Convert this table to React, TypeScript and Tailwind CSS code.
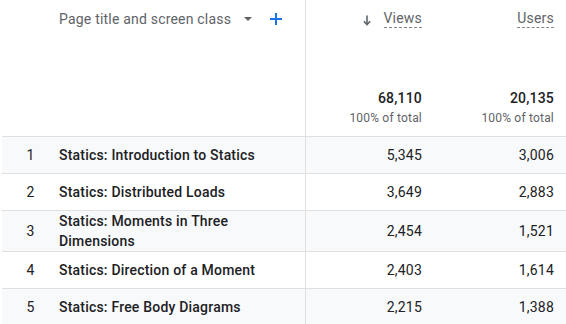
import React from 'react';

interface Row {
  rank: number;
  title: string;
  views: string;
  users: string;
}

const rows: Row[] = [
  { rank: 1, title: 'Statics: Introduction to Statics', views: '5,345', users: '3,006' },
  { rank: 2, title: 'Statics: Distributed Loads', views: '3,649', users: '2,883' },
  { rank: 3, title: 'Statics: Moments in Three Dimensions', views: '2,454', users: '1,521' },
  { rank: 4, title: 'Statics: Direction of a Moment', views: '2,403', users: '1,614' },
  { rank: 5, title: 'Statics: Free Body Diagrams', views: '2,215', users: '1,388' },
];

const ArrowDown = () => (
  <svg width="8" height="11" viewBox="0 0 8 11" fill="none">
    <path d="M4 0.5V9.5" stroke="#5f6368" strokeWidth="1.6" />
    <path d="M0.8 6.2L4 9.6L7.2 6.2" stroke="#5f6368" strokeWidth="1.6" />
  </svg>
);

const App: React.FC = () => {
  return (
    <div className="w-[566px] h-[324px] overflow-hidden bg-white font-['Roboto',sans-serif] tracking-[0.2px] text-[#202124] pl-[2px]">
      {/* Header */}
      <div className="flex h-[137px] border-b border-[#e0e0e0]">
        <div className="w-[304px] border-r border-[#e0e0e0] flex items-start pt-[9px] pl-[57px]">
          <span className="text-[14px] leading-5 text-[#5f6368]">Page title and screen class</span>
          <svg className="ml-[13px] mt-[8px]" width="8" height="4" viewBox="0 0 8 4">
            <path d="M0 0L4 4L8 0Z" fill="#5f6368" />
          </svg>
          <svg className="ml-[18px] mt-[4px]" width="12" height="12" viewBox="0 0 12 12">
            <path d="M6 0V12M0 6H12" stroke="#1a73e8" strokeWidth="2" />
          </svg>
        </div>
        <div className="w-[128px] pr-3 flex flex-col items-end">
          <div className="flex items-start pt-[9px]">
            <span className="mt-[6px] mr-[13px]"><ArrowDown /></span>
            <span className="text-[14px] leading-[17px] text-[#5f6368] border-b border-dashed border-[#80868b] pt-[1px]">Views</span>
          </div>
          <div className="mt-auto pb-[10px] flex flex-col items-end">
            <span className="text-[14px] leading-5 font-medium">68,110</span>
            <span className="mt-[2px] text-[12px] leading-4 text-[#5f6368]">100% of total</span>
          </div>
        </div>
        <div className="w-[132px] pr-3 flex flex-col items-end">
          <div className="flex items-start pt-[9px]">
            <span className="text-[14px] leading-[17px] text-[#5f6368] border-b border-dashed border-[#80868b] pt-[1px]">Users</span>
          </div>
          <div className="mt-auto pb-[10px] flex flex-col items-end">
            <span className="text-[14px] leading-5 font-medium">20,135</span>
            <span className="mt-[2px] text-[12px] leading-4 text-[#5f6368]">100% of total</span>
          </div>
        </div>
      </div>

      {/* Rows */}
      {rows.map((row, i) => (
        <div
          key={row.rank}
          className={`flex min-h-[37px] border-b border-[#e0e0e0] text-[14px] leading-5 ${i % 2 === 0 ? 'bg-[#f8f9fa]' : 'bg-white'}`}
        >
          <div className="w-[304px] border-r border-[#e0e0e0] flex items-center">
            <span className="w-[57px] text-center">{row.rank}</span>
            <span className="w-[215px] font-medium">{row.title}</span>
          </div>
          <div className="w-[128px] pr-3 flex items-center justify-end">{row.views}</div>
          <div className="w-[132px] pr-3 flex items-center justify-end">{row.users}</div>
        </div>
      ))}
    </div>
  );
};

export default App;
